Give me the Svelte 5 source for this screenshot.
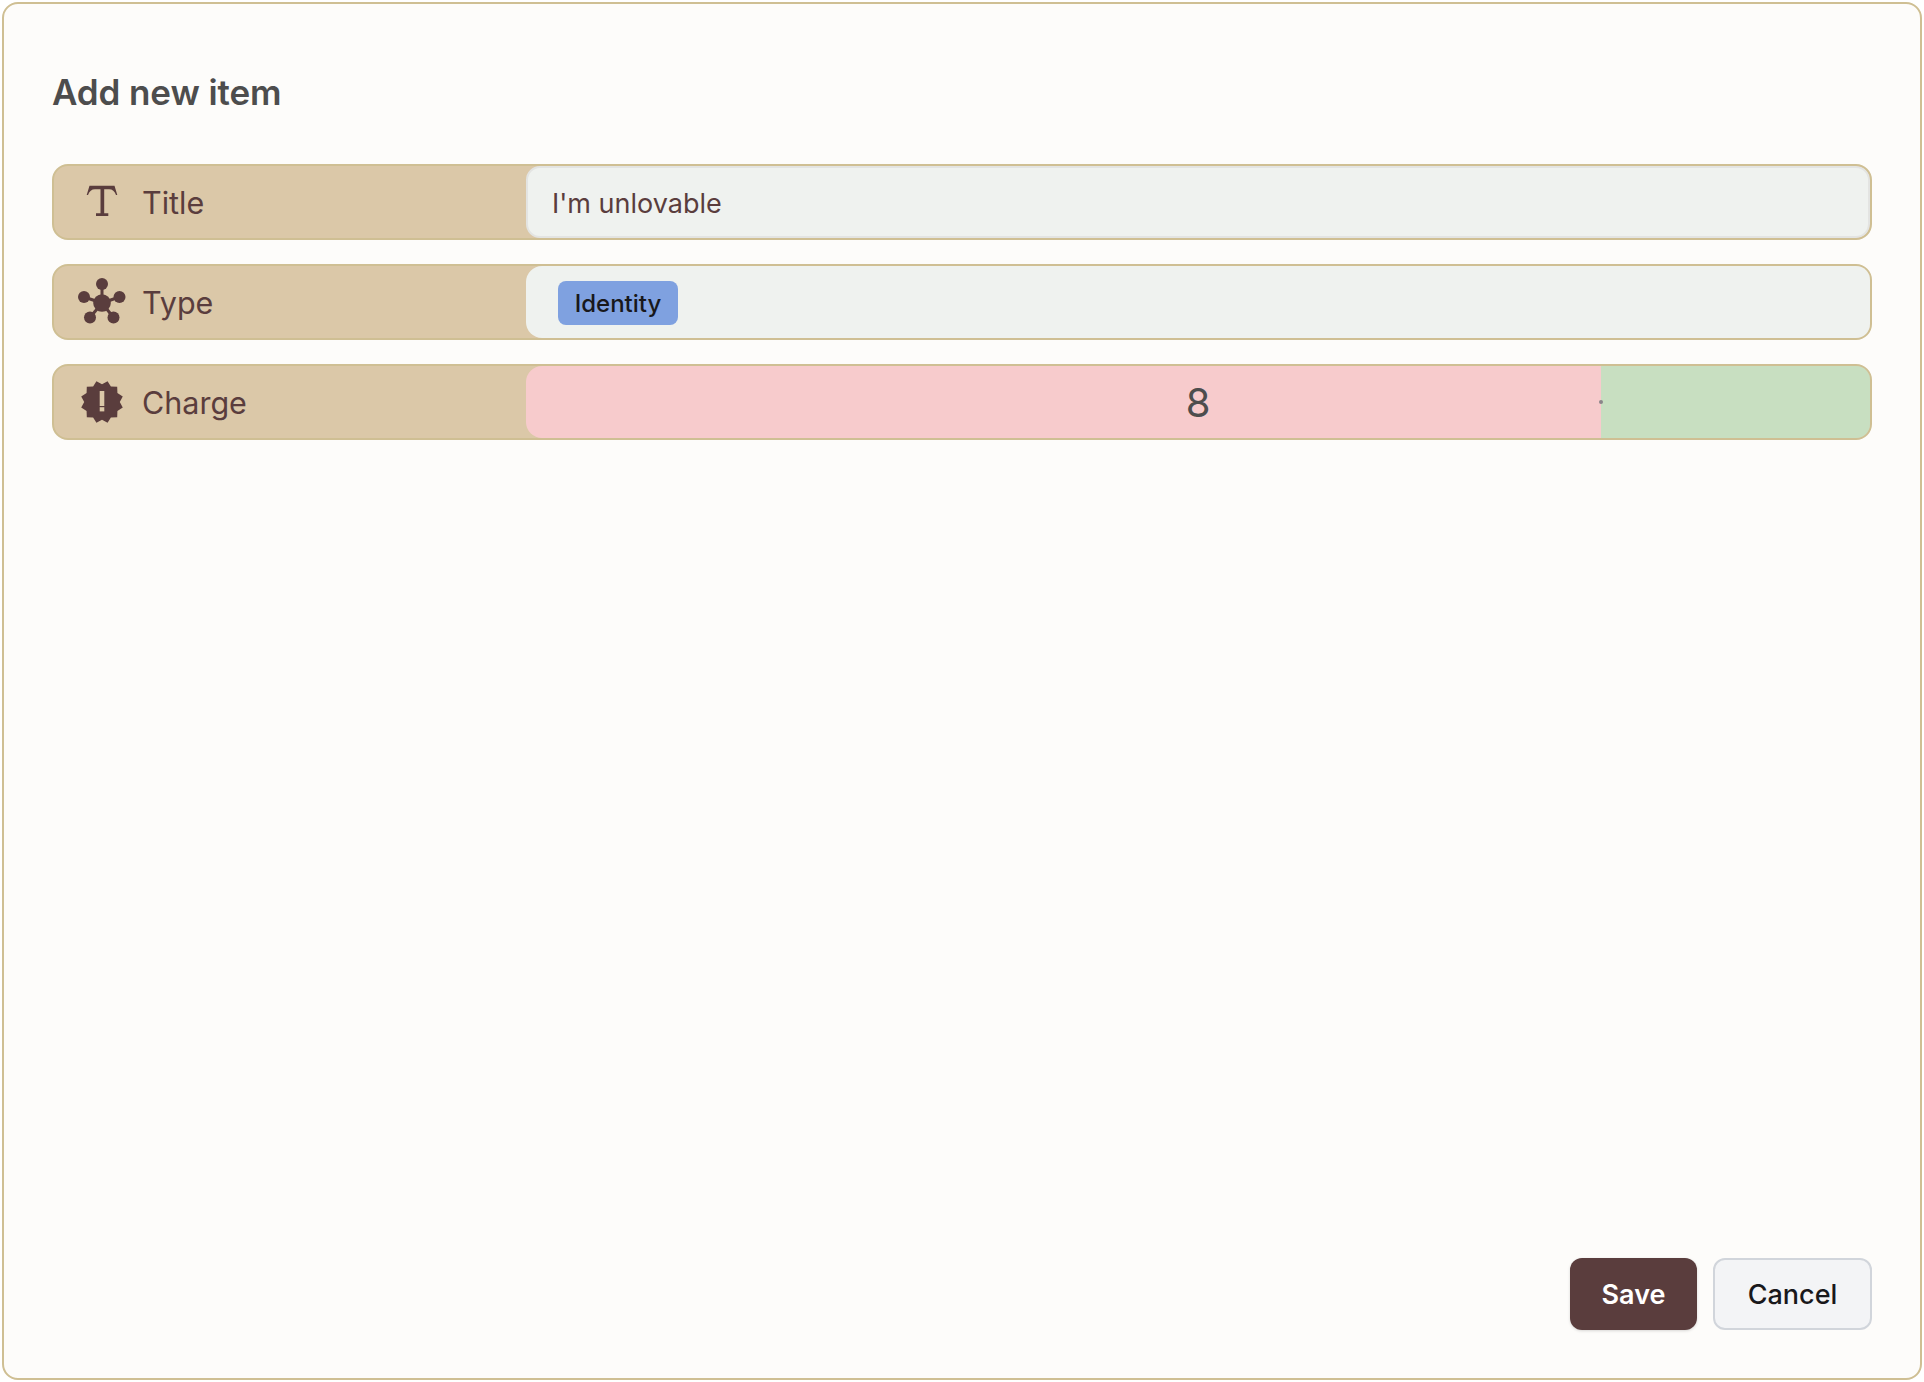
<script>
  const pts = [];
  for (let i = 0; i < 24; i++) {
    const r = i % 2 === 0 ? 21.5 : 17.8;
    const a = (i * Math.PI) / 12 - Math.PI / 2 + Math.PI / 12;
    pts.push(`${(22 + r * Math.cos(a)).toFixed(2)},${(22 + r * Math.sin(a)).toFixed(2)}`);
  }
  const star = pts.join(' ');
  const sats = [[22, 4], [4, 17], [39.5, 17], [10, 37.5], [33.5, 37.5]];
</script>

<div class="frame">
  <h1>Add new item</h1>
  <div class="rows">
    <div class="row">
      <div class="label">
        <svg viewBox="0 0 44 44" class="icon" aria-hidden="true">
          <path d="M6.7 15 L9.5 5.7 H34.5 L37.3 15 H36 Q34 9.3 29 9.3 H24.2 V33.3 H28.3 V36 H16 V33.3 H20.5 V9.3 H15 Q10 9.3 8 15 Z" />
        </svg>
        <span>Title</span>
      </div>
      <div class="field text"><span class="entry">I'm unlovable</span></div>
    </div>
    <div class="row">
      <div class="label">
        <svg viewBox="0 0 44 44" class="icon" aria-hidden="true">
          {#each sats as s}
            <line class="link" x1="22" y1="23" x2={s[0]} y2={s[1]} />
            <circle cx={s[0]} cy={s[1]} r="6" />
          {/each}
          <circle cx="22" cy="23" r="8.8" />
        </svg>
        <span>Type</span>
      </div>
      <div class="field tagfield"><span class="tag">Identity</span></div>
    </div>
    <div class="row">
      <div class="label">
        <svg viewBox="0 0 44 44" class="icon" aria-hidden="true">
          <polygon points={star} />
          <rect class="mark" x="19.7" y="11" width="4.6" height="15" />
          <rect class="mark" x="19.7" y="27.2" width="4.6" height="4.2" />
        </svg>
        <span>Charge</span>
      </div>
      <div class="field charge">
        <div class="neg"></div>
        <div class="pos"></div>
        <span class="value">8</span>
        <span class="thumb"></span>
      </div>
    </div>
  </div>
  <div class="actions">
    <button class="save">Save</button>
    <button class="cancel">Cancel</button>
  </div>
</div>

<style>
  :global(body) {
    margin: 0;
    background: #ffffff;
  }
  .frame {
    box-sizing: border-box;
    margin: 2px;
    width: 1920px;
    height: 1378px;
    padding: 65px 48px 48px;
    display: flex;
    flex-direction: column;
    background: #fdfcfa;
    border: 2px solid #cfbf93;
    border-radius: 16px;
    font-family: Inter, "Liberation Sans", sans-serif;
  }
  h1 {
    margin: 0 0 49px;
    font-size: 35px;
    letter-spacing: -0.1px;
    line-height: 46px;
    font-weight: 600;
    color: #4d4d4d;
  }
  .rows {
    display: flex;
    flex-direction: column;
    gap: 24px;
    flex: 1;
  }
  .row {
    box-sizing: border-box;
    height: 76px;
    display: flex;
    border: 2px solid #cfbf93;
    border-radius: 16px;
    background: #dbc8a8;
    overflow: hidden;
  }
  .label {
    width: 472px;
    flex: none;
    display: flex;
    align-items: center;
    gap: 18px;
    padding-left: 26px;
    box-sizing: border-box;
    font-size: 30.5px;
    color: #5a3d3d;
  }
  .icon {
    width: 44px;
    height: 44px;
    flex: none;
    fill: #5a3d3d;
    overflow: visible;
  }
  .link {
    stroke: #5a3d3d;
    stroke-width: 3;
  }
  .mark {
    fill: #dbc8a8;
  }
  .field {
    flex: 1;
    position: relative;
    border-radius: 16px 0 0 16px;
    display: flex;
    align-items: center;
    overflow: hidden;
  }
  .text {
    box-sizing: border-box;
    background: #eff2ef;
    border: 2px solid #e3e4e2;
    border-radius: 14px;
    padding-left: 24px;
    font-size: 27px;
    color: #5a3d3d;
  }
  .entry {
    padding-top: 2px;
  }
  .tagfield {
    background: #eff2ef;
    padding-left: 32px;
  }
  .tag {
    box-sizing: border-box;
    height: 44px;
    width: 120px;
    margin-top: 2px;
    display: flex;
    align-items: center;
    justify-content: center;
    border-radius: 8px;
    background: #7fa1e0;
    color: #18181b;
    font-size: 24px;
    font-weight: 500;
  }
  .neg {
    width: 1075px;
    align-self: stretch;
    background: #f7cbcc;
  }
  .pos {
    flex: 1;
    align-self: stretch;
    background: #c8dfc1;
  }
  .value {
    position: absolute;
    left: 0;
    right: 0;
    text-align: center;
    font-size: 40px;
    color: #4d4d4d;
  }
  .thumb {
    position: absolute;
    left: 1073px;
    top: 34px;
    width: 4px;
    height: 4px;
    border-radius: 50%;
    background: #8b8589;
  }
  .actions {
    display: flex;
    justify-content: flex-end;
    gap: 16px;
  }
  button {
    box-sizing: border-box;
    height: 72px;
    border-radius: 12px;
    font-family: inherit;
    font-size: 27px;
    font-weight: 500;
  }
  .save {
    width: 127px;
    border: none;
    background: #5a3d3d;
    color: #ffffff;
    font-weight: 600;
    box-shadow: 0 1px 3px rgba(0, 0, 0, 0.15);
  }
  .cancel {
    width: 159px;
    border: 2px solid #d1d5db;
    background: #f3f4f6;
    color: #18181b;
  }
</style>
